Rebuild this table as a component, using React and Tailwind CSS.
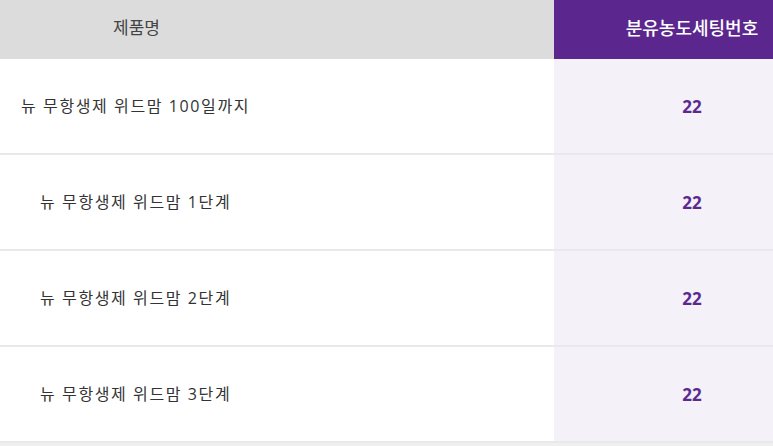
import React from 'react';

const rows = [
  { name: '뉴 무항생제 위드맘 100일까지', value: '22', indent: false },
  { name: '뉴 무항생제 위드맘 1단계', value: '22', indent: true },
  { name: '뉴 무항생제 위드맘 2단계', value: '22', indent: true },
  { name: '뉴 무항생제 위드맘 3단계', value: '22', indent: true },
];

const App = () => {
  return (
    <div
      className="w-[773px] h-[446px] overflow-hidden bg-white"
      style={{ fontFamily: '"Open Sans", "Noto Sans CJK KR", sans-serif' }}
    >
      <div className="w-[830px]">
        {/* Header */}
        <div className="flex h-[59px]">
          <div className="w-[554px] bg-[#dcdcdc] flex items-center pl-[113px] pb-[3px] text-[17px] text-[#444]">
            제품명
          </div>
          <div className="w-[276px] bg-[#5b278f] flex items-center justify-center pb-[3px] text-[18px] font-medium text-white">
            분유농도세팅번호
          </div>
        </div>

        {/* Rows */}
        {rows.map((row, i) => (
          <div key={i} className="flex h-[96px] border-b-[2px] border-[#e9e9eb]">
            <div
              className={`w-[554px] flex items-center text-[16px] tracking-[1.6px] text-[#333] ${row.indent ? 'pl-[40px]' : 'pl-[21px]'}`}
            >
              {row.name}
            </div>
            <div className="w-[276px] bg-[#f4f1f9] flex items-center justify-center pt-[2px] text-[17px] font-bold text-[#5b2a8f]">
              {row.value}
            </div>
          </div>
        ))}
        <div className="h-[4px] bg-[#efefef]" />
      </div>
    </div>
  );
};

export default App;
